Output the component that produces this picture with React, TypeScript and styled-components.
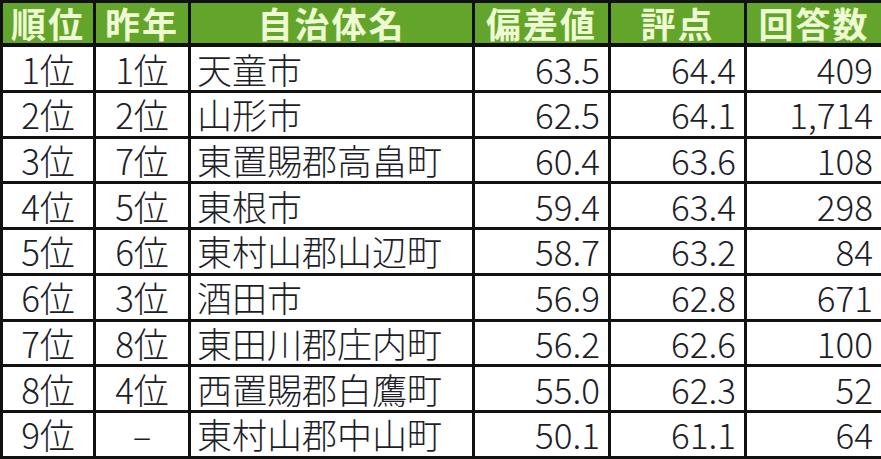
import * as React from 'react';
import styled, { createGlobalStyle } from 'styled-components';

interface IRow {
  rank: string;
  last: string;
  name: string;
  deviation: string;
  score: string;
  answers: string;
}

const rows: IRow[] = [
  { rank: '1位', last: '1位', name: '天童市', deviation: '63.5', score: '64.4', answers: '409' },
  { rank: '2位', last: '2位', name: '山形市', deviation: '62.5', score: '64.1', answers: '1,714' },
  { rank: '3位', last: '7位', name: '東置賜郡高畠町', deviation: '60.4', score: '63.6', answers: '108' },
  { rank: '4位', last: '5位', name: '東根市', deviation: '59.4', score: '63.4', answers: '298' },
  { rank: '5位', last: '6位', name: '東村山郡山辺町', deviation: '58.7', score: '63.2', answers: '84' },
  { rank: '6位', last: '3位', name: '酒田市', deviation: '56.9', score: '62.8', answers: '671' },
  { rank: '7位', last: '8位', name: '東田川郡庄内町', deviation: '56.2', score: '62.6', answers: '100' },
  { rank: '8位', last: '4位', name: '西置賜郡白鷹町', deviation: '55.0', score: '62.3', answers: '52' },
  { rank: '9位', last: '–', name: '東村山郡中山町', deviation: '50.1', score: '61.1', answers: '64' },
];

const widths = [93, 95, 284, 136, 136, 137];

const GlobalStyle = createGlobalStyle`
  html, body {
    margin: 0;
    padding: 0;
    background: #fff;
  }
`;

const Table = styled.table`
  width: 881px;
  height: 459px;
  table-layout: fixed;
  border-collapse: collapse;
  font-family: "Noto Sans CJK JP", "Liberation Sans", sans-serif;
  color: #1e1e2a;
`;

const Head = styled.th`
  height: 40px;
  padding: 0;
  background: #62a52a;
  color: #eefad2;
  font-size: 35px;
  font-weight: 700;
  line-height: 1.15;
  letter-spacing: 2px;
  text-align: center;
  border: 3px solid #111;
  border-bottom-width: 4px;
`;

const Cell = styled.td<{ $align: 'left' | 'center' | 'right' }>`
  height: 40px;
  padding: 0 ${(p) => (p.$align === 'right' ? '8px' : '0')} 0
    ${(p) => (p.$align === 'left' ? '6px' : '0')};
  font-size: 35px;
  font-weight: 300;
  line-height: 1.15;
  text-align: ${(p) => p.$align};
  white-space: nowrap;
  border: 3px solid #111;
  background: #fff;
`;

export default function App(): JSX.Element {
  return (
    <>
      <GlobalStyle />
      <Table>
        <colgroup>
          {widths.map((w, i) => (
            <col key={i} style={{ width: w }} />
          ))}
        </colgroup>
        <thead>
          <tr>
            <Head>順位</Head>
            <Head>昨年</Head>
            <Head>自治体名</Head>
            <Head>偏差値</Head>
            <Head>評点</Head>
            <Head>回答数</Head>
          </tr>
        </thead>
        <tbody>
          {rows.map((r) => (
            <tr key={r.rank}>
              <Cell $align="center">{r.rank}</Cell>
              <Cell $align="center">{r.last}</Cell>
              <Cell $align="left">{r.name}</Cell>
              <Cell $align="right">{r.deviation}</Cell>
              <Cell $align="right">{r.score}</Cell>
              <Cell $align="right">{r.answers}</Cell>
            </tr>
          ))}
        </tbody>
      </Table>
    </>
  );
}
